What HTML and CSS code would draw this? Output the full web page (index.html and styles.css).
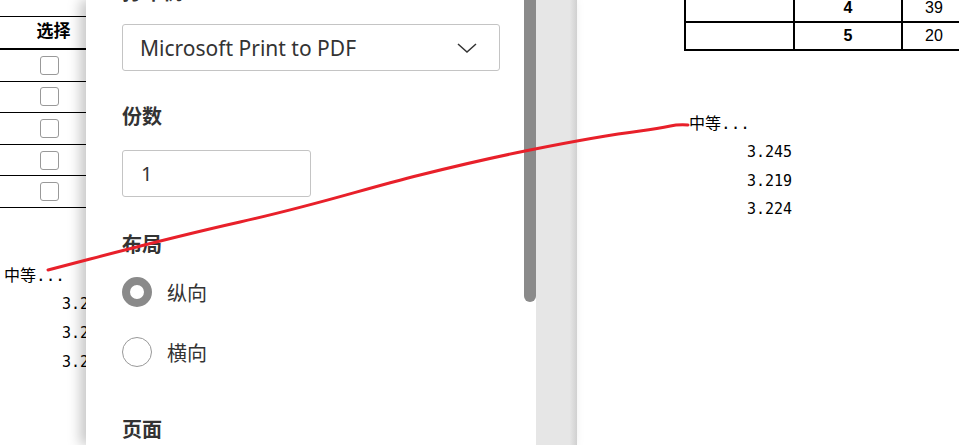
FILE: index.html
```html
<!DOCTYPE html>
<html lang="zh-CN">
<head>
  <meta charset="UTF-8" />
  <meta name="viewport" content="width=device-width, initial-scale=1.0" />
  <title>打印</title>
  <link rel="stylesheet" href="styles.css">
</head>
<body>
  <div class="page-left">
    <div class="pick-table">
      <div class="pick-head">选择</div>
      <div class="pick-row"><span class="box"></span></div>
      <div class="pick-row"><span class="box"></span></div>
      <div class="pick-row"><span class="box"></span></div>
      <div class="pick-row"><span class="box"></span></div>
      <div class="pick-row"><span class="box"></span></div>
    </div>
    <div class="scores scores-left">
      <div class="grade">中等...</div>
      <div class="val">3.245</div>
      <div class="val">3.219</div>
      <div class="val">3.224</div>
    </div>
  </div>

  <div class="dialog">
    <div class="settings">
      <div class="settings-body">
        <div class="label label-top">打印机</div>
        <div class="select">
          <span>Microsoft Print to PDF</span>
          <svg class="chevron" width="20" height="10" viewBox="0 0 20 10">
            <path d="M1 1 L10 9 L19 1" fill="none" stroke="#333" stroke-width="1.5" />
          </svg>
        </div>
        <div class="label label-copies">份数</div>
        <div class="input">1</div>
        <div class="label label-layout">布局</div>
        <div class="radio-row">
          <span class="radio checked"></span><span>纵向</span>
        </div>
        <div class="radio-row">
          <span class="radio"></span><span>横向</span>
        </div>
        <div class="label label-page">页面</div>
      </div>
      <div class="scroll-track"><div class="scroll-thumb"></div></div>
    </div>
    <div class="preview-gap"></div>
  </div>

  <div class="page-right">
    <table class="num-table">
      <colgroup><col class="c1"><col class="c2"><col class="c3"></colgroup>
      <tr><td></td><td class="num">4</td><td class="amt">39</td></tr>
      <tr><td></td><td class="num">5</td><td class="amt">20</td></tr>
    </table>
    <div class="scores scores-right">
      <div class="grade">中等...</div>
      <div class="val">3.245</div>
      <div class="val">3.219</div>
      <div class="val">3.224</div>
    </div>
  </div>

  <svg class="ink" width="959" height="445" viewBox="0 0 959 445">
    <path d="M48 270 C 110 254, 160 240, 240 222 S 360 190, 420 175 S 500 156, 530 150 S 600 136, 640 131 S 668 124, 688 125"
      fill="none" stroke="#e8202a" stroke-width="3" stroke-linecap="round" />
  </svg>
</body>
</html>
```

FILE: styles.css
```css
:root {
  --text-dark: #333333;
  --line: #c4c4c4;
  --thumb: #8a8a8a;
  --gap: #e6e6e6;
}
* { box-sizing: border-box; }
body {
  margin: 0;
  height: 445px;
  overflow: hidden;
  display: flex;
  background: white;
  font-family: "Liberation Sans", "Noto Sans CJK SC", sans-serif;
}

/* page behind the dialog, left slice */
.page-left {
  width: 86px;
  flex-shrink: 0;
  overflow: hidden;
}
.pick-table {
  width: 98px;
  margin-top: 16px;
  border-top: 1px solid #000;
}
.pick-head {
  height: 33px;
  border-bottom: 2px solid #000;
  text-align: center;
  padding-left: 9px;
  font-weight: bold;
  font-size: 17px;
  line-height: 30px;
}
.pick-row {
  height: 31.6px;
  border-bottom: 1px solid #000;
  display: flex;
  align-items: center;
  justify-content: center;
}
.box {
  width: 19px;
  height: 19px;
  border: 1px solid #999;
  border-radius: 3px;
  background: white;
}
.scores {
  font-family: "DejaVu Sans Mono", "Noto Sans CJK SC", monospace;
  font-size: 15px;
  color: #000;
  white-space: nowrap;
}
.scores .grade { font-size: 16px; line-height: 20px; }
.scores .val { line-height: 29px; padding-left: 58px; }
.scores-left { margin: 58px 0 0 4px; }
.scores-left .grade { margin-bottom: 4px; }

/* print dialog */
.dialog {
  width: 491px;
  flex-shrink: 0;
  display: flex;
  position: relative;
  z-index: 1;
  box-shadow: -6px 0 12px rgba(0, 0, 0, 0.22);
}
.settings {
  width: 450px;
  display: flex;
  background: white;
}
.settings-body {
  flex: 1;
  padding-left: 36px;
  color: var(--text-dark);
  font-family: "Segoe UI", "Noto Sans", "Noto Sans CJK SC", sans-serif;
}
.label {
  font-weight: bold;
  font-size: 20px;
  line-height: 26px;
  font-family: "Noto Sans CJK SC", sans-serif;
}
.label-top { margin-top: -21px; }
.label-copies { margin-top: 32px; }
.label-layout { margin-top: 34px; }
.label-page { margin-top: 49px; }
.select {
  margin-top: 19px;
  width: 378px;
  height: 47px;
  border: 1px solid var(--line);
  border-radius: 3px;
  display: flex;
  align-items: center;
  justify-content: space-between;
  padding: 0 22px 0 17px;
  font-size: 21px;
}
.input {
  margin-top: 21px;
  width: 189px;
  height: 47px;
  border: 1px solid var(--line);
  border-radius: 3px;
  padding-left: 18px;
  font-size: 20px;
  line-height: 45px;
}
.radio-row {
  display: flex;
  align-items: center;
  gap: 15px;
  font-size: 20px;
  height: 30px;
  margin-top: 30px;
  font-family: "Noto Sans CJK SC", sans-serif;
}
.label + .radio-row { margin-top: 20px; }
.radio {
  width: 30px;
  height: 30px;
  border-radius: 50%;
  border: 1px solid #999;
}
.radio.checked { border: 8px solid var(--thumb); }
.scroll-track { width: 12px; }
.scroll-thumb {
  height: 302px;
  background: var(--thumb);
  border-radius: 0 0 6px 6px;
}
.preview-gap {
  flex: 1;
  background: linear-gradient(to right, var(--gap) 82%, #d0d0d0 100%);
}

/* page behind the dialog, right slice */
.page-right {
  flex: 1;
  overflow: hidden;
  padding-left: 107px;
}
.num-table {
  border-collapse: collapse;
  table-layout: fixed;
  width: 340px;
  margin-top: -7px;
  white-space: nowrap;
}
.num-table .c1 { width: 109px; }
.num-table .c2 { width: 108px; }
.num-table .c3 { width: 123px; }
.num-table td {
  border: 2px solid #000;
  height: 28px;
  padding: 0;
  font-size: 16px;
}
.num-table .amt { padding-left: 22px; }
.num-table .num { text-align: center; font-weight: bold; }
.scores-right { margin: 63px 0 0 5px; }
.scores-right .val { line-height: 28.5px; }
.scores-right .grade { margin-bottom: 4px; }

/* pen stroke drawn over everything */
.ink {
  position: absolute;
  left: 0;
  top: 0;
  z-index: 2;
  pointer-events: none;
}
```
